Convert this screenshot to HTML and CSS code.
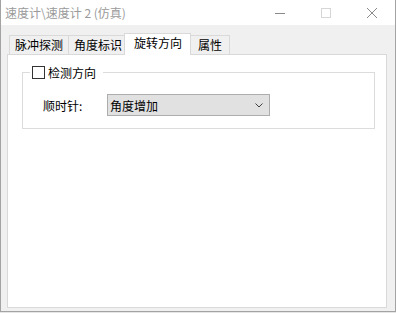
FILE: index.html
```html
<!DOCTYPE html>
<html lang="zh-CN">
<head>
<meta charset="utf-8">
<link rel="stylesheet" href="styles.css">
</head>
<body>
<div class="window">
  <div class="titlebar">
    <span class="title">速度计\速度计 2 (仿真)</span>
    <div class="controls">
      <span class="btn"><svg width="10" height="10" viewBox="0 0 10 10"><line x1="0" y1="5.5" x2="10" y2="5.5" stroke="#8a8a8a" stroke-width="1"/></svg></span>
      <span class="btn"><svg width="10" height="10" viewBox="0 0 10 10"><rect x="0.5" y="0.5" width="9" height="9" fill="none" stroke="#d6d6d6" stroke-width="1"/></svg></span>
      <span class="btn"><svg width="10" height="10" viewBox="0 0 10 10"><path d="M0 0 L10 10 M10 0 L0 10" stroke="#8a8a8a" stroke-width="1" fill="none"/></svg></span>
    </div>
  </div>
  <div class="client">
    <div class="tabs">
      <div class="tab tab-a">脉冲探测</div>
      <div class="tab tab-b">角度标识</div>
      <div class="tab tab-sel">旋转方向</div>
      <div class="tab tab-d">属性</div>
    </div>
    <div class="panel">
      <fieldset class="group">
        <legend class="legend"><span class="check"></span><span>检测方向</span></legend>
        <div class="row">
          <span class="lbl">顺时针:</span>
          <div class="combo">
            <span class="combo-text">角度增加</span>
            <svg class="chev" width="8" height="5" viewBox="0 0 8 5"><path d="M0.5 0.5 L4 4 L7.5 0.5" stroke="#404040" stroke-width="1" fill="none"/></svg>
          </div>
        </div>
      </fieldset>
    </div>
  </div>
</div>
</body>
</html>
```
FILE: styles.css
```css
html, body {
  margin: 0;
  padding: 0;
  background: #e6e6e6;
}
body {
  font-family: "Noto Sans CJK SC", "Microsoft YaHei", sans-serif;
  font-size: 12px;
  color: #000;
}
.window {
  width: 396px;
  height: 312px;
  box-sizing: border-box;
  border-left: 1px solid #a3a3a3;
  border-right: 1px solid #a3a3a3;
  border-bottom: 1px solid #a3a3a3;
  background: #f0f0f0;
  display: flex;
  flex-direction: column;
}
.titlebar {
  height: 25px;
  background: #fff;
  display: flex;
  align-items: center;
  flex: none;
}
.title {
  color: #9a9a9a;
  padding-left: 4px;
  line-height: 25px;
  white-space: nowrap;
}
.controls {
  margin-left: auto;
  display: flex;
  height: 25px;
}
.btn {
  width: 46px;
  height: 25px;
  display: flex;
  align-items: center;
  justify-content: center;
}
.btn svg { display: block; margin-top: 1px; }
.client {
  flex: 1;
  display: flex;
  flex-direction: column;
  padding: 8px 8px 3px 6px;
  min-height: 0;
}
.tabs {
  display: flex;
  align-items: flex-end;
  height: 21px;
  flex: none;
}
.tab {
  box-sizing: border-box;
  height: 19px;
  border: 1px solid #d9d9d9;
  border-bottom: none;
  background: #f0f0f0;
  line-height: 18px;
  white-space: nowrap;
}
.tab-a { margin-left: 2px; padding: 0 5px; }
.tab-b { margin-left: -1px; padding: 0 5px; }
.tab-sel {
  margin-left: -4px;
  padding: 0 8px 3px 9px;
  height: 22px;
  margin-bottom: -1px;
  background: #fff;
  position: relative;
  z-index: 1;
}
.tab-d { margin-left: -1px; padding: 0 7px; }
.panel {
  flex: 1;
  background: #fff;
  border: 1px solid #d9d9d9;
  padding: 9px 11px 0 14px;
}
.group {
  margin: 0;
  border: 1px solid #dcdcdc;
  padding: 13px 10px 12px 7px;
}
.legend {
  padding: 0 7px 0 2px;
  display: flex;
  align-items: center;
  line-height: 17px;
}
.check {
  width: 13px;
  height: 13px;
  box-sizing: border-box;
  border: 1px solid #333;
  background: #fff;
  margin-right: 3px;
}
.row {
  display: flex;
  align-items: center;
  margin-left: 13px;
}
.lbl {
  width: 64px;
  flex: none;
  line-height: 17px;
}
.combo {
  box-sizing: border-box;
  width: 163px;
  height: 22px;
  background: #e1e1e1;
  border: 1px solid #adadad;
  display: flex;
  align-items: center;
  padding: 0 6px 0 2px;
}
.combo-text { line-height: 17px; }
.chev { margin-left: auto; display: block; }
```
